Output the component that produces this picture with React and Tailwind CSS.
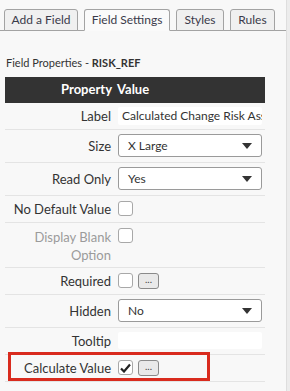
import React from "react";

const Caret = () => (
  <svg width="10" height="6" viewBox="0 0 10 6" className="shrink-0">
    <path d="M0 0 L10 0 L5 6 Z" fill="#333" />
  </svg>
);

const Select = ({ value }) => (
  <div className="flex h-[23px] w-[144px] items-center justify-between rounded-[3px] border border-[#9a9a9a] bg-white pl-[9px] pr-[9px] text-[12px] text-[#333]">
    <span>{value}</span>
    <Caret />
  </div>
);

const Checkbox = ({ checked }) => (
  <div className="flex h-[15px] w-[15px] items-center justify-center rounded-[3px] border border-[#a8a8a8] bg-white">
    {checked && (
      <svg width="11" height="10" viewBox="0 0 11 10">
        <path d="M1 5.5 L4 8.5 L10 1.5" fill="none" stroke="#222" strokeWidth="2.2" />
      </svg>
    )}
  </div>
);

const Dots = () => (
  <div className="flex h-[16px] w-[21px] items-center justify-center rounded-[3px] border border-[#8a8a8a] bg-[#e9e9e9] pb-[4px] text-[10px] leading-none text-[#444]">
    ...
  </div>
);

const Row = ({ label, h, muted, top, children, overlay }) => (
  <div
    className={`relative flex border-b border-[#e4e4e4] ${h} ${top ? "items-start" : "items-center"}`}
  >
    <div
      className={`w-[111px] shrink-0 pl-[4px] pr-[5px] text-right text-[13px] leading-[18px] ${
        muted ? "text-[#9b9b9b]" : "text-[#333]"
      } ${top ? "pt-[5px]" : ""}`}
    >
      {label}
    </div>
    <div className={`flex flex-1 items-center gap-[5px] pl-[2px] pr-[3px] ${top ? "pt-[5px]" : ""}`}>
      {children}
    </div>
    {overlay}
  </div>
);

const tabs = [
  { t: "Add a Field", w: "w-[74px]" },
  { t: "Field Settings", w: "w-[86px]" },
  { t: "Styles", w: "w-[48px]" },
  { t: "Rules", w: "w-[45px]" },
];

export default function App() {
  return (
    <div
      className="h-[391px] w-[290px] bg-[#ececec]"
      style={{ fontFamily: "Lato, 'Open Sans', sans-serif" }}
    >
      <div className="h-full w-[287px] border-r border-[#dedede] bg-[#f8f8f8]">
        <div className="flex items-end gap-[6px] border-b border-[#a3a3a3] pl-[4px] pt-[9px]">
          {tabs.map(({ t, w }) => {
            const active = t === "Field Settings";
            return (
              <div
                key={t}
                className={`-mb-px flex h-[22px] ${w} items-center justify-center whitespace-nowrap rounded-t-[3px] border border-[#a3a3a3] text-[12px] text-[#3a3a4a] ${
                  active ? "border-b-[#fafafa] bg-[#fafafa]" : "bg-[#f0f0f0]"
                }`}
              >
                {t}
              </div>
            );
          })}
        </div>

        <div className="pl-[6px] pt-[24px] text-[11px] text-[#333]">
          Field Properties - <span className="font-bold">RISK_REF</span>
        </div>

        <div className="ml-[5px] mt-[5px] w-[260px]">
          <div className="flex h-[26px] items-center bg-[#333] text-[13px] font-bold text-white">
            <div className="w-[107px] text-right">Property</div>
            <div className="pl-[5px]">Value</div>
          </div>

          <Row label="Label" h="h-[27px]">
            <div className="flex h-[18px] w-[144px] items-center overflow-hidden whitespace-nowrap rounded-[2px] bg-white pl-[4px] text-[12px] text-[#333]">
              Calculated Change Risk Assessment
            </div>
          </Row>
          <Row label="Size" h="h-[33px]">
            <Select value="X Large" />
          </Row>
          <Row label="Read Only" h="h-[33px]">
            <Select value="Yes" />
          </Row>
          <Row label="No Default Value" h="h-[27px]">
            <Checkbox />
          </Row>
          <Row label="Display Blank Option" h="h-[45px]" muted top>
            <Checkbox />
          </Row>
          <Row label="Required" h="h-[27px]">
            <Checkbox />
            <Dots />
          </Row>
          <Row label="Hidden" h="h-[33px]">
            <Select value="No" />
          </Row>
          <Row label="Tooltip" h="h-[27px]">
            <div className="h-[17px] w-[144px] rounded-[2px] bg-white" />
          </Row>
          <Row
            label="Calculate Value"
            h="h-[27px]"
            overlay={
              <div className="pointer-events-none absolute left-[3px] top-[-3px] h-[29px] w-[202px] border-[3px] border-[#d92b1e]" />
            }
          >
            <Checkbox checked />
            <Dots />
          </Row>
        </div>
      </div>
    </div>
  );
}
